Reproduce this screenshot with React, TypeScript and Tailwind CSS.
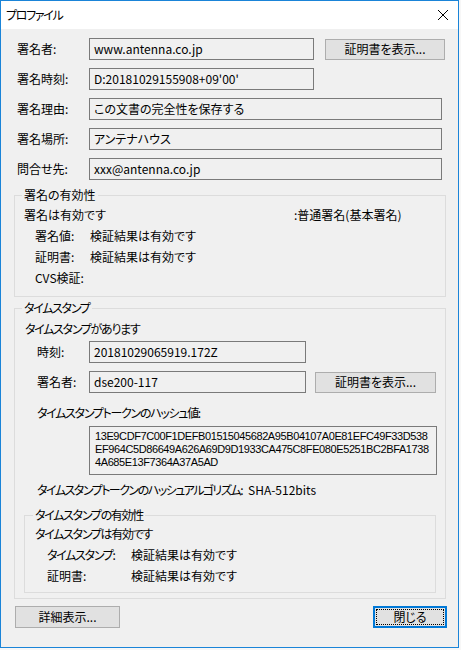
import React from "react";

const font = "font-['Noto_Sans_CJK_JP',sans-serif] [font-feature-settings:'palt'] text-[12px] text-black";
// katakana-heavy strings are set a little tighter
const kt = "tracking-[-1.3px]";

function Field({ label, value, width, button }: { label: string; value: string; width: string; button?: boolean }) {
  return (
    <div className="flex h-[22px] items-center pl-[3px]">
      <div className="w-[72px] leading-none">{label}</div>
      <div className={`${width} h-[22px] border border-[#7a7a7a] bg-[#f0f0f0] pl-[4px] flex items-center leading-none whitespace-nowrap`}>
        {value}
      </div>
      {button && <WinButton className="ml-[11px] w-[120px] h-[21px]">証明書を表示...</WinButton>}
    </div>
  );
}

function WinButton({ children, className = "" }: { children: React.ReactNode; className?: string }) {
  return (
    <div className={`${className} flex items-center justify-center border border-[#adadad] bg-[#e1e1e1] leading-none`}>
      {children}
    </div>
  );
}

function Line({ h, className = "", children }: { h: string; className?: string; children: React.ReactNode }) {
  return <div className={`${h} flex items-center leading-none whitespace-nowrap ${className}`}>{children}</div>;
}

export default function App() {
  return (
    <div className={`w-[461px] h-[650px] bg-[#f7f7f7] ${font}`}>
      <div className="w-[459px] h-[648px] border border-[#1a84d8] bg-[#f0f0f0] flex flex-col">
        {/* title bar */}
        <div className="h-[28px] bg-white flex items-center justify-between pl-[5px] pr-[9px]">
          <span className={`leading-none ${kt}`}>プロファイル</span>
          <svg width="12" height="12" viewBox="0 0 12 12" className="mb-[1px]">
            <path d="M1 1 L11 11 M11 1 L1 11" stroke="#000" strokeWidth="1" />
          </svg>
        </div>

        {/* body */}
        <div className="flex flex-col pt-[9px] pl-[13px] pr-[12px]">
          <div className="flex flex-col gap-[8px]">
            <Field label="署名者:" value="www.antenna.co.jp" width="w-[225px]" button />
            <Field label="署名時刻:" value="D:20181029155908+09'00'" width="w-[225px]" />
            <Field label="署名理由:" value="この文書の完全性を保存する" width="w-[353px]" />
            <Field label="署名場所:" value="アンテナハウス" width="w-[353px]" />
            <Field label="問合せ先:" value="xxx@antenna.co.jp" width="w-[353px]" />
          </div>

          {/* signature validity */}
          <fieldset className="mt-[7px] w-[432px] border border-[#dcdcdc] pl-[9px] pb-[8px]">
            <legend className="ml-[-2px] px-[2px] h-[16px] leading-[16px]">署名の有効性</legend>
            <Line h="h-[21px]" className="mt-[1px]">
              <span className="w-[270px]">署名は有効です</span>
              <span>:普通署名(基本署名)</span>
            </Line>
            <div className="pl-[11px]">
              <Line h="h-[21px]">
                <span className="w-[55px]">署名値:</span>
                <span>検証結果は有効です</span>
              </Line>
              <Line h="h-[21px]">
                <span className="w-[55px]">証明書:</span>
                <span>検証結果は有効です</span>
              </Line>
              <Line h="h-[21px]">
                <span className="w-[55px]">CVS検証:</span>
              </Line>
            </div>
          </fieldset>

          {/* timestamp */}
          <fieldset className="mt-[3px] w-[432px] border border-[#dcdcdc] pl-[9px] pb-[5px]">
            <legend className={`ml-[-2px] px-[2px] h-[16px] leading-[16px] ${kt}`}>タイムスタンプ</legend>
            <Line h="h-[20px]" className={`mt-[3px] pl-[1px] ${kt}`}>タイムスタンプがあります</Line>

            <div className="mt-[2px] flex flex-col gap-[8px]">
              <div className="flex h-[22px] items-center">
                <div className="w-[65px] pl-[13px] leading-none">時刻:</div>
                <div className="w-[217px] h-[22px] border border-[#7a7a7a] pl-[4px] flex items-center leading-none">
                  20181029065919.172Z
                </div>
              </div>
              <div className="flex h-[22px] items-center">
                <div className="w-[65px] pl-[13px] leading-none">署名者:</div>
                <div className="w-[217px] h-[22px] border border-[#7a7a7a] pl-[4px] flex items-center leading-none">
                  dse200-117
                </div>
                <WinButton className="ml-[9px] w-[121px] h-[21px]">証明書を表示...</WinButton>
              </div>
            </div>

            <Line h="h-[20px]" className={`mt-[10px] pl-[13px] ${kt}`}>タイムスタンプトークンのハッシュ値:</Line>
            <div className="mt-[3px] ml-[65px] w-[348px] h-[49px] border border-[#7a7a7a] pl-[5px] pt-[3px] font-['Liberation_Sans',sans-serif] text-[11px] leading-[13px] tracking-[-0.4px] whitespace-nowrap">
              <div className="h-[13px]">13E9CDF7C00F1DEFB01515045682A95B04107A0E81EFC49F33D538</div>
              <div className="h-[13px]">EF964C5D86649A626A69D9D1933CA475C8FE080E5251BC2BFA1738</div>
              <div className="h-[13px]">4A685E13F7364A37A5AD</div>
            </div>
            <Line h="h-[20px]" className="mt-[5px] pl-[13px]">
              <span className="w-[211px] tracking-[-1.5px]">タイムスタンプトークンのハッシュアルゴリズム:</span>
              <span>SHA-512bits</span>
            </Line>

            {/* timestamp validity */}
            <fieldset className="mt-[7px] w-[412px] border border-[#dcdcdc] pl-[10px] pb-[6px]">
              <legend className={`ml-[-2px] px-[2px] h-[16px] leading-[16px] ${kt}`}>タイムスタンプの有効性</legend>
              <Line h="h-[20px]" className={`mt-[1px] ${kt}`}>タイムスタンプは有効です</Line>
              <div className="pl-[12px]">
                <Line h="h-[21px]">
                  <span className={`w-[84px] ${kt}`}>タイムスタンプ:</span>
                  <span>検証結果は有効です</span>
                </Line>
                <Line h="h-[21px]">
                  <span className="w-[84px]">証明書:</span>
                  <span>検証結果は有効です</span>
                </Line>
              </div>
            </fieldset>
          </fieldset>

          {/* footer buttons */}
          <div className="mt-[7px] flex justify-between pl-[1px]">
            <WinButton className="w-[105px] h-[22px]">詳細表示...</WinButton>
            <div className="w-[74px] h-[22px] border-2 border-[#0078d7] bg-[#e1e1e1] p-[1px] mr-[-1px]">
              <div className="w-full h-full border border-dotted border-black flex items-center justify-center leading-none">
                閉じる
              </div>
            </div>
          </div>
        </div>
      </div>
    </div>
  );
}
